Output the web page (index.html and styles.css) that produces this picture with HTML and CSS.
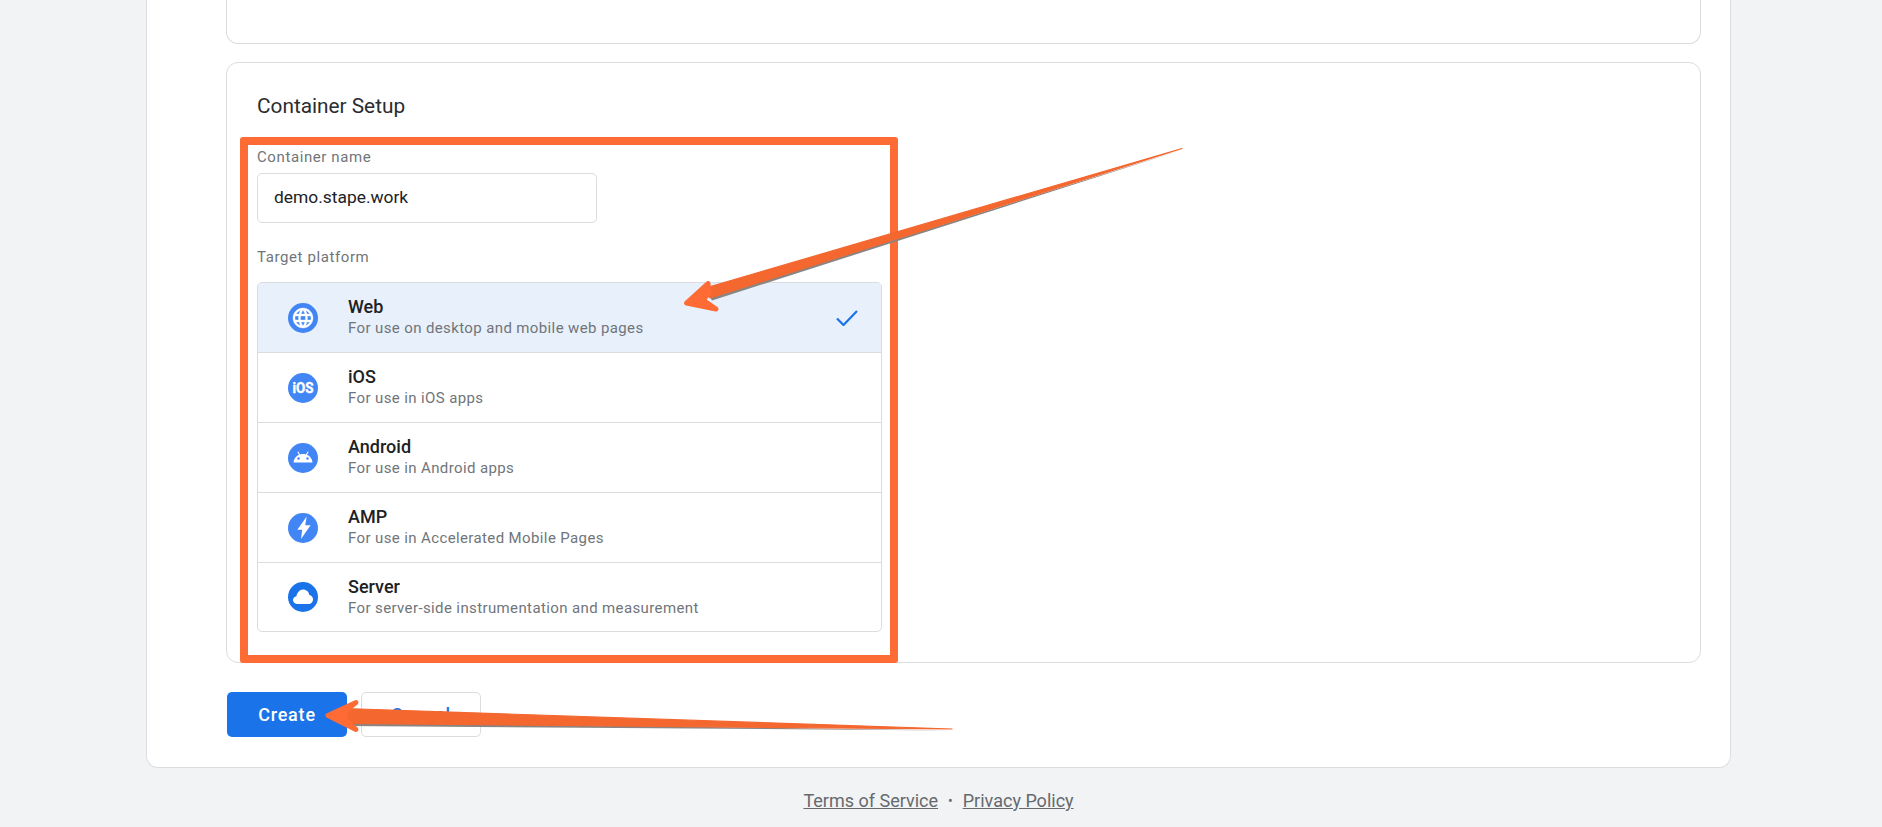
FILE: index.html
```html
<!DOCTYPE html>
<html lang="en">
<head>
<meta charset="utf-8">
<title>Container Setup</title>
<link rel="stylesheet" href="styles.css">
</head>
<body>
<main class="card">
  <div class="stub"></div>
  <section class="setup">
    <h2 class="setup-title">Container Setup</h2>
    <div class="label label-name">Container name</div>
    <div class="input">demo.stape.work</div>
    <div class="label label-target">Target platform</div>
    <ul class="list">
      <li class="row row-on">
        <svg class="icon" viewBox="0 0 30 30"><circle cx="15" cy="15" r="15" fill="#4285f4"/><g transform="translate(3 3)"><path fill="#fff" stroke="#fff" stroke-width=".35" d="M11.990 2C6.470 2 2 6.480 2 12s4.470 10 9.990 10C17.520 22 22 17.520 22 12S17.520 2 11.990 2zm6.930 6h-2.950c-.32-1.250-.78-2.450-1.380-3.560 1.840.63 3.370 1.910 4.330 3.560zM12 4.040c.83 1.200 1.480 2.530 1.910 3.960h-3.820c.43-1.430 1.080-2.760 1.910-3.960zM4.260 14C4.100 13.360 4 12.690 4 12s.1-1.360.26-2h3.380c-.08.66-.14 1.320-.14 2 0 .68.06 1.340.14 2H4.260zm.82 2h2.950c.32 1.250.78 2.450 1.380 3.560-1.840-.63-3.370-1.900-4.330-3.560zm2.950-8H5.080c.96-1.660 2.490-2.930 4.330-3.560C8.810 5.550 8.350 6.750 8.030 8zM12 19.960c-.83-1.200-1.480-2.530-1.910-3.960h3.820c-.43 1.430-1.080 2.760-1.910 3.960zM14.340 14H9.660c-.09-.66-.16-1.320-.16-2 0-.68.07-1.350.16-2h4.680c.09.65.16 1.320.16 2 0 .68-.07 1.340-.16 2zm.25 5.560c.6-1.110 1.060-2.310 1.380-3.560h2.950c-.96 1.650-2.490 2.930-4.330 3.560zM16.360 14c.08-.66.14-1.320.14-2 0-.68-.06-1.340-.14-2h3.380c.16.64.26 1.310.26 2s-.1 1.360-.26 2h-3.380z"/></g></svg>
        <div class="text"><div class="name">Web</div><div class="desc">For use on desktop and mobile web pages</div></div>
        <svg class="check" viewBox="0 0 22 16"><path d="M1 8.500 7.500 15 21 1" fill="none" stroke="#1a73e8" stroke-width="2.200"/></svg>
      </li>
      <li class="row">
        <svg class="icon" viewBox="0 0 30 30"><circle cx="15" cy="15" r="15" fill="#4285f4"/><text class="ios" x="4.500" y="20" textLength="21" lengthAdjust="spacingAndGlyphs">iOS</text></svg>
        <div class="text"><div class="name">iOS</div><div class="desc">For use in iOS apps</div></div>
      </li>
      <li class="row">
        <svg class="icon" viewBox="0 0 30 30"><circle cx="15" cy="15" r="15" fill="#4285f4"/><path d="M5.500 19.500c.3-3.700 2.500-6.500 5.500-7.700L9.300 9l1-.6 1.800 3c1.900-.6 3.900-.6 5.800 0l1.800-3 1 .6-1.700 2.800c3 1.200 5.200 4 5.500 7.700z" fill="#fff"/><circle cx="10.500" cy="15.500" r="1.200" fill="#4285f4"/><circle cx="19.500" cy="15.500" r="1.200" fill="#4285f4"/></svg>
        <div class="text"><div class="name">Android</div><div class="desc">For use in Android apps</div></div>
      </li>
      <li class="row">
        <svg class="icon" viewBox="0 0 30 30"><circle cx="15" cy="15" r="15" fill="#4285f4"/><path d="M18.700 3.500 9.300 16.800h4.900L13 26l9.600-13.700h-5.400z" fill="#fff"/></svg>
        <div class="text"><div class="name">AMP</div><div class="desc">For use in Accelerated Mobile Pages</div></div>
      </li>
      <li class="row">
        <svg class="icon" viewBox="0 0 30 30"><circle cx="15" cy="15" r="15" fill="#1a73e8"/><path d="M9 22c-2.300 0-4-1.700-4-3.900 0-2 1.500-3.600 3.400-3.900C9.200 10.400 11.800 7.500 15 7.500c3.200 0 5.800 2.300 6.400 5.400 2 .3 3.600 2 3.600 4.300 0 2.700-2 4.800-4.500 4.800z" fill="#fff"/></svg>
        <div class="text"><div class="name">Server</div><div class="desc">For server-side instrumentation and measurement</div></div>
      </li>
    </ul>
  </section>
  <div class="actions">
    <button class="btn btn-primary">Create</button>
    <button class="btn btn-ghost">Cancel</button>
  </div>
</main>
<footer class="footer"><a href="#">Terms of Service</a><span class="dot">•</span><a href="#">Privacy Policy</a></footer>

<div class="mark"></div>
<svg class="arrows" viewBox="0 0 1882 827">
  <g fill="#8a8582" stroke="none">
    <path d="M1183 149.500 710 297 712 300.500z"/>
    <path d="M953 730.500 345 722 345 726z"/>
  </g>
  <g fill="#f4672f" stroke="#f4672f" stroke-linejoin="round">
    <path stroke-width="1.200" d="M1182 148.500 707 287.500 710 298z"/>
    <path stroke-width="1.200" d="M952 729 345 708.500 345 723.500z"/>
  </g>
  <g fill="#ff6b35" stroke="#ff6b35" stroke-linejoin="round" stroke-linecap="round">
    <path stroke-width="5" d="M708 283.500 686.500 303 716 309 703 300 709 293z"/>
    <path stroke-width="5" d="M356 702.500 328 715.500 356 729.500 345 719 345 711z"/>
  </g>
</svg>
</body>
</html>
```

FILE: styles.css
```css
* { box-sizing: border-box; }
html, body { margin: 0; height: 827px; overflow: hidden; }
body { background: #f1f3f4; font-family: Roboto, "Liberation Sans", sans-serif; color: #202124; position: relative; }

.card { width: 1585px; height: 768px; margin-left: 146px; padding: 0 29px 0 79px; background: #fff; border: 1px solid #dadce0; border-top: 0; border-radius: 0 0 12px 12px; }
.stub { height: 44px; border: 1px solid #dadce0; border-top: 0; border-radius: 0 0 12px 12px; }
.setup { height: 601px; margin-top: 18px; padding: 30px 30px 0; border: 1px solid #dadce0; border-radius: 12px; }
.setup-title { margin: 0; font-size: 20.800px; font-weight: 400; line-height: 27px; color: #2a2c30; }

.label { font-size: 15px; line-height: 18px; color: #70757a; letter-spacing: .6px; }
.label-name { margin-top: 28px; }
.input { width: 340px; height: 50px; margin-top: 7px; padding-left: 16px; border: 1px solid #dadce0; border-radius: 5px; font-size: 17.400px; line-height: 47px; }
.label-target { margin-top: 25px; }

.list { width: 625px; margin: 16px 0 0; padding: 0; list-style: none; border: 1px solid #dadce0; border-radius: 5px; overflow: hidden; }
.row { display: flex; align-items: center; height: 70px; padding: 0 23px 0 30px; border-top: 1px solid #dadce0; }
.row:first-child { border-top: 0; height: 69px; }
.row:last-child { height: 69px; }
.row-on { background: #e8f0fb; }
.icon { width: 30px; height: 30px; flex: none; }
.ios { font-family: "Liberation Sans Narrow", Roboto, sans-serif; font-size: 14px; font-weight: 700; fill: #fff; stroke: #fff; stroke-width: .4px; }
.text { flex: 1; margin-left: 30px; }
.name { margin-top: -1px; font-size: 18px; font-weight: 500; line-height: 21px; }
.desc { margin-top: 1px; font-size: 15px; line-height: 20px; color: #70757a; letter-spacing: .38px; }
.check { width: 22px; height: 16px; flex: none; }

.actions { display: flex; gap: 14px; margin: 29px 0 0 1px; }
.btn { width: 120px; height: 45px; padding: 0; border-radius: 5px; font: 500 18px Roboto, sans-serif; letter-spacing: .8px; }
.btn-primary { background: #1a73e8; border: 0; color: #fff; }
.btn-ghost { background: #fff; border: 1px solid #dadce0; color: #1a73e8; }

.footer { display: flex; justify-content: center; align-items: center; gap: 10px; width: 1585px; margin: 22px 0 0 146px; font-size: 18px; line-height: 22px; color: #666a6e; }
.footer a { color: #666a6e; }
.dot { font-size: 14px; }

.mark { position: absolute; left: 240px; top: 137px; width: 658px; height: 526px; border: 8px solid #ff6b35; border-radius: 3px; }
.arrows { position: absolute; left: 0; top: 0; width: 1882px; height: 827px; pointer-events: none; }
```
